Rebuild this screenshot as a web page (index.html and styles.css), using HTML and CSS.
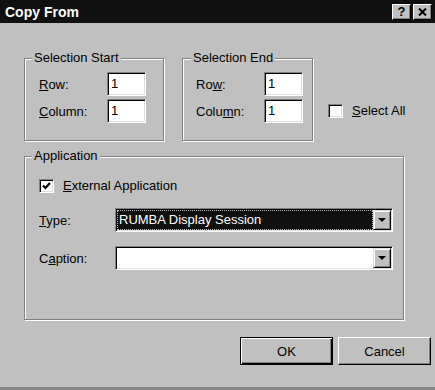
FILE: index.html
```html
<!DOCTYPE html>
<html lang="en">
<head>
    <meta charset="UTF-8">
    <title>Copy From</title>
    <link rel="stylesheet" href="styles.css">
</head>
<body>
    <div class="dialog">
        <div class="titlebar">
            <span class="title">Copy From</span>
            <div class="title-btns">
                <button class="tbtn">?</button>
                <button class="tbtn">
                    <svg width="9" height="8" viewBox="0 0 9 8"><path d="M1 0.5 L8 7.5 M8 0.5 L1 7.5" stroke="#000" stroke-width="2" fill="none"/></svg>
                </button>
            </div>
        </div>

        <div class="content">
            <div class="top-row">
                <fieldset class="group group-start">
                    <legend>Selection Start</legend>
                    <div class="fields">
                        <label><u>R</u>ow:</label>
                        <div class="edit">1</div>
                        <label><u>C</u>olumn:</label>
                        <div class="edit">1</div>
                    </div>
                </fieldset>

                <fieldset class="group group-end">
                    <legend>Selection End</legend>
                    <div class="fields">
                        <label>Ro<u>w</u>:</label>
                        <div class="edit">1</div>
                        <label>Colu<u>m</u>n:</label>
                        <div class="edit">1</div>
                    </div>
                </fieldset>

                <div class="check select-all">
                    <span class="box"></span>
                    <span><u>S</u>elect All</span>
                </div>
            </div>

            <fieldset class="group group-app">
                <legend>Application</legend>
                <div class="check">
                    <span class="box">
                        <svg width="11" height="10" viewBox="0 0 11 10"><polyline points="2,4.5 4.5,7 9,2" stroke="#000" stroke-width="2.2" fill="none"/></svg>
                    </span>
                    <span><u>E</u>xternal Application</span>
                </div>
                <div class="app-fields">
                    <label><u>T</u>ype:</label>
                    <div class="combo">
                        <span class="combo-text selected">RUMBA Display Session</span>
                        <span class="drop"><span class="arrow"></span></span>
                    </div>
                    <label>C<u>a</u>ption:</label>
                    <div class="combo">
                        <span class="combo-text"></span>
                        <span class="drop"><span class="arrow"></span></span>
                    </div>
                </div>
            </fieldset>

            <div class="buttons">
                <button class="btn btn-default">OK</button>
                <button class="btn">Cancel</button>
            </div>
        </div>
    </div>
</body>
</html>
```

FILE: styles.css
```css
:root {
    --face: #c0c0c0;
    --shadow: #808080;
    --light: #dfdfdf;
    --title: #101010;
}

* {
    margin: 0;
    padding: 0;
    box-sizing: border-box;
    font-family: 'Liberation Sans', Arial, sans-serif;
}

body {
    background: var(--face);
    color: #000;
    font-size: 13px;
}

.dialog {
    width: 435px;
    height: 390px;
    background: var(--face);
    border-bottom: 3px solid #868686;
}

/* title bar */
.titlebar {
    height: 23px;
    background: var(--title);
    display: flex;
    align-items: center;
    justify-content: space-between;
    padding: 0 3px 0 5px;
}

.title {
    color: #fff;
    font-weight: bold;
    font-size: 14px;
}

.title-btns {
    display: flex;
    gap: 2px;
}

.tbtn {
    width: 19px;
    height: 16px;
    background: var(--face);
    border: 1px solid;
    border-color: #fff #000 #000 #fff;
    box-shadow: inset -1px -1px var(--shadow);
    display: flex;
    align-items: center;
    justify-content: center;
    font-weight: bold;
    font-size: 13px;
    line-height: 14px;
}

/* body */
.content {
    padding: 27px 0 0 24px;
}

.top-row {
    display: flex;
    align-items: flex-start;
}

.group {
    border: 1px solid var(--shadow);
    box-shadow: inset 1px 1px #fff, 1px 1px #fff;
    min-width: 0;
    margin: 0;
}

.group legend {
    background: var(--face);
    padding: 0 2px;
    line-height: 16px;
    font-size: 13px;
}

.group-start {
    width: 140px;
    padding: 6px 17px 17px 14px;
}

.group-start legend,
.group-app legend {
    margin-left: -7px;
}

.group-end {
    width: 131px;
    margin-left: 18px;
    padding: 6px 9px 17px 13px;
}

.group-end legend {
    margin-left: -5px;
}

.fields {
    display: grid;
    grid-template-columns: 68px 39px;
    grid-template-rows: 24px 24px;
    row-gap: 3px;
    align-items: center;
}

.edit {
    height: 24px;
    background: #fff;
    border: 1px solid;
    border-color: var(--shadow) #fff #fff var(--shadow);
    box-shadow: inset 1px 1px #000, inset -1px -1px var(--light);
    padding-left: 3px;
    line-height: 22px;
}

.check {
    display: flex;
    align-items: center;
    gap: 9px;
}

.box {
    width: 15px;
    height: 14px;
    background: #fff;
    border: 1px solid;
    border-color: var(--shadow) #fff #fff var(--shadow);
    box-shadow: inset 1px 1px #000, inset -1px -1px var(--light);
    display: flex;
    align-items: center;
    justify-content: center;
}

.select-all {
    margin: 53px 0 0 15px;
}

.group-app {
    width: 380px;
    margin-top: 7px;
    padding: 14px 10px 49px 14px;
}

.app-fields {
    display: grid;
    grid-template-columns: 76px 278px;
    grid-template-rows: 24px 24px;
    row-gap: 14px;
    margin-top: 15px;
    align-items: center;
}

.combo {
    height: 24px;
    display: flex;
    background: #fff;
    border: 1px solid;
    border-color: var(--shadow) #fff #fff var(--shadow);
    box-shadow: inset 1px 1px #000, inset -1px -1px var(--light);
    padding: 1px;
}

.combo-text {
    flex: 1;
    line-height: 18px;
    padding-left: 1px;
    border: 1px solid transparent;
}

.combo-text.selected {
    background: var(--title);
    color: #fff;
    border: 1px dotted #bbb;
}

.drop {
    width: 18px;
    height: 20px;
    background: var(--face);
    border: 1px solid;
    border-color: var(--light) #000 #000 var(--light);
    box-shadow: inset 1px 1px #fff, inset -1px -1px var(--shadow);
    display: flex;
    align-items: center;
    justify-content: center;
}

.arrow {
    width: 0;
    height: 0;
    border-left: 4px solid transparent;
    border-right: 4px solid transparent;
    border-top: 4px solid #000;
}

/* dialog buttons */
.buttons {
    display: flex;
    justify-content: flex-end;
    gap: 5px;
    margin-top: 17px;
    padding-right: 4px;
}

.btn {
    width: 93px;
    height: 28px;
    background: var(--face);
    border: 1px solid;
    border-color: #fff #000 #000 #fff;
    box-shadow: inset -1px -1px var(--shadow);
    font-size: 13px;
    color: #000;
}

.btn-default {
    border: 1px solid #000;
    box-shadow: inset 1px 1px #fff, inset -1px -1px #000, inset -2px -2px var(--shadow);
}
```
